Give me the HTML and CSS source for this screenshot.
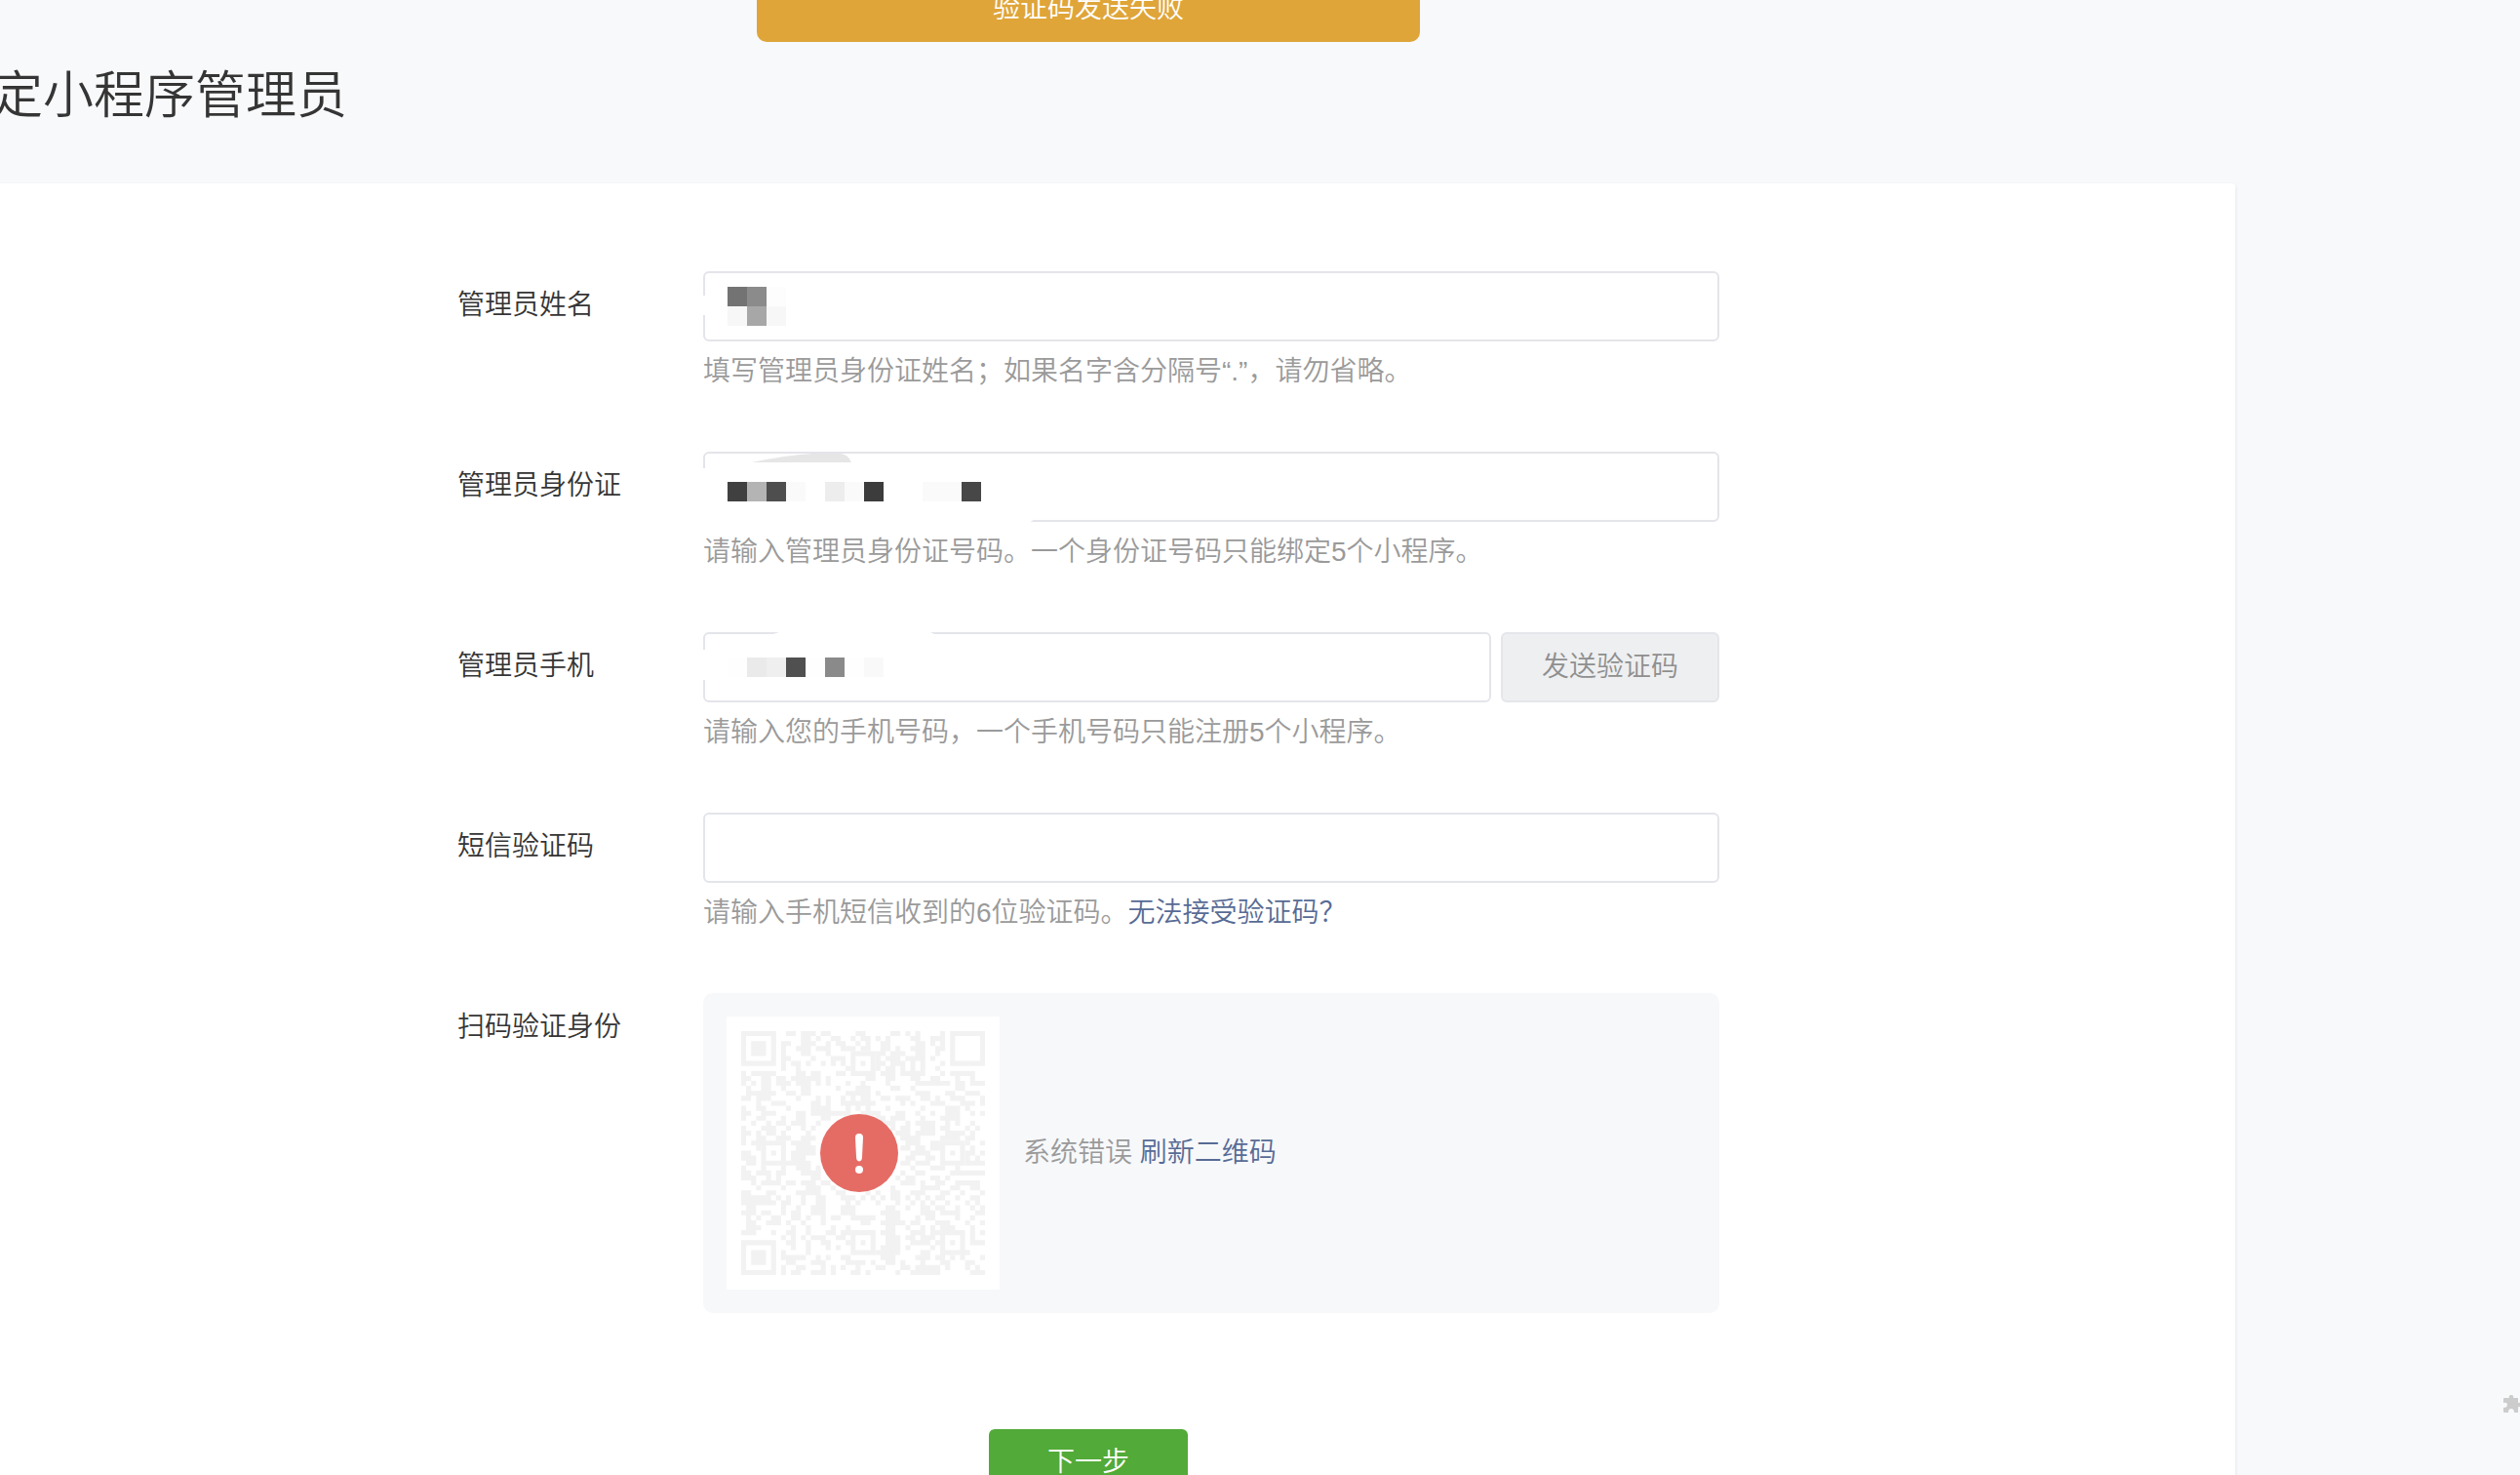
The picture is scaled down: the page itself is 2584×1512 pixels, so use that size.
FILE: index.html
```html
<!DOCTYPE html>
<html lang="zh-CN">
<head>
<meta charset="utf-8">
<title>绑定小程序管理员</title>
<link rel="stylesheet" href="styles.css">
</head>
<body>
<div class="toast" role="alert">验证码发送失败</div>
<main class="page">
  <h1 class="title">绑定小程序管理员</h1>
  <form class="card">
    <div class="row">
      <label class="label" for="name">管理员姓名</label>
      <div class="field">
        <div class="control">
          <input class="input" id="name" type="text">
          <svg class="mask" width="340" height="76" viewBox="0 0 340 76" aria-hidden="true">
            <path d="M0 25h2v20H0z" fill="#fff"/>
            <path d="M25 16h20v20H25z" fill="#737373"/>
            <path d="M45 16h20v20H45z" fill="#8b8b8b"/>
            <path d="M65 16h20v20H65z" fill="#fdfdfd"/>
            <path d="M25 36h20v20H25zM65 36h20v20H65z" fill="#f7f7f7"/>
            <path d="M45 36h20v20H45z" fill="#a7a7a7"/>
          </svg>
        </div>
        <p class="hint">填写管理员身份证姓名；如果名字含分隔号“.”，请勿省略。</p>
      </div>
    </div>
    <div class="row">
      <label class="label" for="idcard">管理员身份证</label>
      <div class="field">
        <div class="control">
          <input class="input" id="idcard" type="text">
          <svg class="mask" width="340" height="76" viewBox="0 0 340 76" aria-hidden="true">
            <path d="M0 17h4v51h330l6 1-6 4H0z" fill="#fff"/>
            <path d="M50 11Q82 4 112 2h29q8 1 11 9z" fill="#e6e6e6"/>
            <path d="M25 31h20v20H25z" fill="#404040"/>
            <path d="M45 31h20v20H45z" fill="#b4b4b4"/>
            <path d="M65 31h20v20H65z" fill="#4e4e4e"/>
            <path d="M85 31h20v20H85zM145 31h20v20h-20zM225 31h40v20h-40z" fill="#fafafa"/>
            <path d="M125 31h20v20h-20z" fill="#ededed"/>
            <path d="M165 31h20v20h-20z" fill="#3c3c3c"/>
            <path d="M265 31h20v20h-20z" fill="#474747"/>
          </svg>
        </div>
        <p class="hint">请输入管理员身份证号码。一个身份证号码只能绑定5个小程序。</p>
      </div>
    </div>
    <div class="row">
      <label class="label" for="phone">管理员手机</label>
      <div class="field">
        <div class="group">
          <div class="control">
            <input class="input" id="phone" type="tel">
            <svg class="mask" width="340" height="76" viewBox="0 0 340 76" aria-hidden="true">
              <path d="M0 18h3v31H0zM72 2l6-2h155l4 2z" fill="#fff"/>
              <path d="M45 26h20v20H45z" fill="#eaeaea"/>
              <path d="M65 26h20v20H65z" fill="#efefef"/>
              <path d="M85 26h20v20H85z" fill="#505050"/>
              <path d="M125 26h20v20h-20z" fill="#8a8a8a"/>
              <path d="M25 26h20v20H25zM105 26h20v20h-20zM145 26h20v20h-20z" fill="#fefefe"/>
              <path d="M165 26h20v20h-20z" fill="#f9f9f9"/>
            </svg>
          </div>
          <button class="send" type="button" disabled>发送验证码</button>
        </div>
        <p class="hint">请输入您的手机号码，一个手机号码只能注册5个小程序。</p>
      </div>
    </div>
    <div class="row">
      <label class="label" for="code">短信验证码</label>
      <div class="field">
        <div class="control"><input class="input" id="code" type="text"></div>
        <p class="hint">请输入手机短信收到的6位验证码。<a class="link" href="#help">无法接受验证码？</a></p>
      </div>
    </div>
    <div class="row">
      <span class="label">扫码验证身份</span>
      <div class="panel">
        <div class="qr">
          <svg class="code" viewBox="0 0 49 49" aria-hidden="true">
            <g fill="none" stroke="#f2f2f2" stroke-width="1">
              <path d="M.5.5h6v6h-6zM42.5.5h6v6h-6zM.5 42.5h6v6h-6zM22.5 4.5h4v4h-4zM4.5 22.5h4v4h-4zM40.5 22.5h4v4h-4zM22.5 40.5h4v4h-4zM40.5 40.5h4v4h-4z"/>
              <path d="M3.5 2v3M3.5 44v3" stroke-width="3"/>
              <path transform="translate(0 .5)" d="
M9 0h2M12 0h3M16 0h2M23 0h2M30 0h2M33 0h1M35 0h1M40 0h1
M12 1h2M15 1h1M18 1h2M22 1h1M24 1h2M27 1h1M29 1h1M34 1h2M38 1h3
M8 2h2M12 2h3M17 2h1M19 2h2M23 2h1M25 2h1M28 2h2M35 2h2M38 2h1M40 2h1
M8 3h1M11 3h3M15 3h3M20 3h3M24 3h2M28 3h2M31 3h1M34 3h3M39 3h2
M8 4h1M12 4h2M17 4h1M27 4h2M30 4h3M35 4h2M39 4h1
M8 5h2M14 5h1M18 5h3M27 5h1M29 5h3M33 5h4M38 5h1
M8 6h1M10 6h2M13 6h1M16 6h1M18 6h1M20 6h1M24 6h1M27 6h2M30 6h3M34 6h1M36 6h1M40 6h1
M8 7h1M11 7h1M21 7h1M27 7h1M29 7h2M32 7h1M34 7h1M36 7h1M39 7h1
M0 8h1M2 8h5M11 8h2M14 8h2M19 8h2M28 8h3M32 8h5M40 8h1M42 8h5
M0 9h2M4 9h2M7 9h2M10 9h6M17 9h1M25 9h2M29 9h2M34 9h2M38 9h2M43 9h1M46 9h1
M0 10h1M2 10h1M4 10h2M7 10h3M11 10h3M15 10h1M17 10h1M21 10h1M24 10h1M29 10h1M35 10h7M43 10h2M46 10h3
M1 11h1M4 11h2M8 11h1M12 11h2M19 11h1M23 11h3M30 11h2M34 11h1M43 11h2
M1 12h5M6 12h1M9 12h2M12 12h2M21 12h5M27 12h1M35 12h3M41 12h2M45 12h3
M0 13h2M3 13h3M11 13h1M15 13h1M17 13h1M20 13h1M22 13h1M24 13h2M28 13h2M31 13h3M36 13h2M39 13h1M42 13h3M48 13h1
M3 14h1M6 14h3M14 14h2M17 14h1M20 14h7M32 14h1M34 14h1M38 14h3M44 14h3M48 14h1
M0 15h1M3 15h2M9 15h1M14 15h4M21 15h1M23 15h1M25 15h1M29 15h1M36 15h1M41 15h3M45 15h1
M0 16h2M4 16h3M11 16h2M14 16h5M19 16h3M24 16h4M31 16h2M35 16h1M38 16h1M41 16h3M46 16h1M48 16h1
M0 17h1M3 17h2M8 17h1M11 17h2M16 17h2M27 17h2M30 17h3M36 17h1M40 17h4
M2 18h1M5 18h1M7 18h2M10 18h3M15 18h1M28 18h3M33 18h1M35 18h4M41 18h1M43 18h1M46 18h1
M0 19h1M4 19h3M9 19h1M12 19h1M14 19h1M30 19h1M32 19h2M36 19h3M40 19h2M45 19h1M47 19h1
M0 20h2M3 20h1M5 20h2M8 20h1M13 20h1M31 20h3M35 20h4M41 20h4M46 20h1
M0 21h1M3 21h2M7 21h3M12 21h3M32 21h2M34 21h2M40 21h4M45 21h2
M0 22h1M2 22h3M10 22h4M33 22h3M38 22h2M45 22h1M48 22h1
M3 23h1M11 23h4M32 23h2M35 23h2M38 23h2M46 23h1
M0 24h2M6 24h1M10 24h5M34 24h4M42 24h1M45 24h2M48 24h1
M0 25h3M10 25h3M33 25h2M37 25h2M45 25h1M47 25h1
M1 26h2M9 26h5M32 26h2M35 26h3M45 26h4
M0 27h1M4 27h1M8 27h1M11 27h3M15 27h1M34 27h1M38 27h3M43 27h1
M0 28h2M3 28h3M7 28h2M12 28h4M32 28h1M35 28h2M42 28h7
M0 29h3M5 29h1M7 29h1M14 29h2M31 29h1M33 29h2M38 29h2M41 29h1
M2 30h1M4 30h4M9 30h2M12 30h3M16 30h2M32 30h3M36 30h1M39 30h2M43 30h5
M3 31h1M8 31h1M13 31h3M18 31h1M30 31h1M36 31h4M42 31h2M46 31h2
M0 32h2M5 32h2M11 32h5M19 32h2M25 32h1M27 32h1M30 32h2M34 32h3M40 32h2M44 32h1M48 32h1
M0 33h6M7 33h1M9 33h1M12 33h1M15 33h2M20 33h3M24 33h1M26 33h1M28 33h1M30 33h2M33 33h1M35 33h1M37 33h1M39 33h2M43 33h1M46 33h2
M0 34h7M8 34h2M12 34h1M15 34h2M21 34h1M23 34h1M27 34h1M31 34h1M34 34h1M36 34h1M38 34h1M41 34h1M45 34h1M47 34h1
M1 35h2M8 35h1M11 35h1M14 35h3M20 35h3M29 35h2M33 35h1M36 35h2M39 35h2M43 35h1M46 35h1M48 35h1
M0 36h3M4 36h2M8 36h1M10 36h2M14 36h3M20 36h3M28 36h4M36 36h3M40 36h4M47 36h2
M1 37h1M3 37h1M6 37h2M10 37h2M13 37h1M16 37h1M18 37h2M22 37h5M29 37h3M35 37h1M37 37h2M43 37h1M46 37h1
M1 38h2M5 38h3M9 38h1M12 38h1M16 38h1M24 38h2M28 38h5M34 38h2M39 38h3M45 38h1M48 38h1
M1 39h3M10 39h1M13 39h1M18 39h1M21 39h1M29 39h2M33 39h1M36 39h1M38 39h1M40 39h3M46 39h1
M0 40h3M6 40h1M9 40h2M13 40h1M17 40h2M20 40h2M28 40h3M34 40h3M38 40h2M46 40h1M48 40h1
M8 41h1M10 41h1M12 41h1M14 41h3M19 41h2M29 41h3M33 41h2M36 41h3M46 41h1
M9 42h2M13 42h1M16 42h2M21 42h1M24 42h1M29 42h3M34 42h4M39 42h1M42 42h1M46 42h3
M10 43h1M13 43h1M17 43h1M19 43h1M28 43h4M33 43h1M38 43h1
M8 44h1M13 44h1M27 44h5M36 44h2M40 44h1M44 44h2
M8 45h5M15 45h1M17 45h1M20 45h2M28 45h3M35 45h3M39 45h2M42 45h1M44 45h1M48 45h1
M9 46h2M14 46h3M21 46h4M26 46h1M29 46h2M32 46h1M36 46h1M40 46h2M45 46h2
M8 47h1M11 47h2M16 47h1M18 47h1M20 47h1M23 47h1M27 47h2M32 47h2M35 47h5M41 47h1M45 47h1M47 47h1
M8 48h1M10 48h2M14 48h3M18 48h1M22 48h2M25 48h1M31 48h1M34 48h6M46 48h3"/>
            </g>
          </svg>
          <svg class="error" viewBox="0 0 80 80" role="img" aria-label="错误">
            <circle cx="40" cy="40" r="40" fill="#e56c65"/>
            <path d="M36 24q0-4 4-4t4 4l-1 20q0 4-3 4.5-3-.5-3-4.5z" fill="#fff"/>
            <circle cx="40" cy="57" r="4" fill="#fff"/>
          </svg>
        </div>
        <p class="status">系统错误 <a class="link" href="#refresh">刷新二维码</a></p>
      </div>
    </div>
    <div class="actions"><button class="next" type="submit">下一步</button></div>
  </form>
</main>
<svg class="plugin" viewBox="0 0 20 20" aria-hidden="true">
  <path d="M3 3h3q-1-3 2-3t2 3h5v5q3-1 3 2t-3 2v6h-4q0-4-3-4t-3 4H1q-1 0-1-1v-4q4 0 4-3T0 8V4q0-1 1-1z" fill="#ccc"/>
</svg>
</body>
</html>
```
FILE: styles.css
```css
* { box-sizing: border-box; }
html { overflow: hidden; }
body {
  margin: 0;
  height: 100vh;
  overflow: hidden;
  background: #f8f9fb;
  color: #353535;
  font: 350 28px/44px "Liberation Sans", "Noto Sans CJK SC", sans-serif;
}
h1, p { margin: 0; font-weight: 350; }
input, button { font: inherit; }

/* the page is scrolled slightly to the right and down */
.page { margin: 0 292px 0 -60px; }
.title {
  padding: 58px 0 50px;
  font-size: 52px;
  line-height: 80px;
}
.card {
  padding: 90px 529px 60px;
  background: #fff;
  border-radius: 4px;
  box-shadow: 0 2px 4px #dfe1e6;
}
.row {
  display: grid;
  grid-template-columns: 252px 1fr;
  margin-bottom: 33px;
}
.label { padding-top: 13px; }
.field { display: flex; flex-direction: column; gap: 9px; height: 152px; }
.control { position: relative; flex: 1; min-width: 0; }
.field > .control, .group { flex: none; height: 72px; }
.group { display: flex; gap: 10px; }
.input {
  display: block;
  width: 100%;
  height: 72px;
  padding: 0 24px;
  border: 2px solid #e4e5ea;
  border-radius: 6px;
  background: #fff;
  outline: 0;
}
.mask { position: absolute; left: 0; top: 0; pointer-events: none; }
.hint, .status { color: #9a9a9a; }
.link { color: #576b95; text-decoration: none; }
.send {
  width: 224px;
  border: 2px solid #e4e6ea;
  border-radius: 6px;
  background: #eeeff1;
  color: #8f8f8f;
}
.panel {
  display: flex;
  align-items: center;
  gap: 24px;
  padding: 24px;
  border-radius: 10px;
  background: #f7f8fa;
}
.qr {
  position: relative;
  display: grid;
  place-items: center;
  width: 280px;
  height: 280px;
  background: #fff;
}
.code { width: 250px; height: 250px; }
.error { position: absolute; left: 96px; top: 100px; width: 80px; height: 80px; }
.actions { display: flex; justify-content: center; padding-top: 86px; }
.next {
  width: 204px;
  height: 68px;
  border: 0;
  border-radius: 6px;
  background: #52aa38;
  color: #fff;
}
.toast {
  position: fixed;
  top: -25px;
  left: calc(50% - 516px);
  width: 680px;
  border-radius: 10px;
  background: #dfa539;
  color: #fff;
  line-height: 68px;
  text-align: center;
}
.plugin { position: fixed; right: -3px; top: 1430px; width: 20px; height: 20px; }
```
